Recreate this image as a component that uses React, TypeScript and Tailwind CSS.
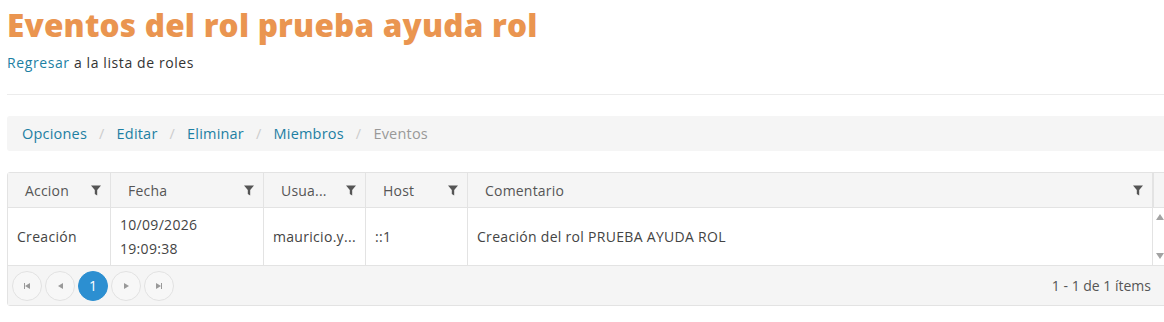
import { ReactNode } from "react";

const font = { fontFamily: '"Open Sans", "Noto Sans", sans-serif' };

const Funnel = () => (
    <svg width="10" height="11" viewBox="0 0 10 11" className="shrink-0">
        <path d="M0 0.5 H10 L6.2 5 V10.5 L3.8 9 V5 Z" fill="#555" />
    </svg>
);

const HeaderCell = ({ label, width, last }: { label: string; width: string; last?: boolean }) => (
    <div className={`${width} flex items-center justify-between pl-[17px] pr-[9px] ${last ? "" : "border-r"} border-[#e3e3e3]`}>
        <span className="text-[14px] text-[#555] tracking-[0.2px]">{label}</span>
        <Funnel />
    </div>
);

const BodyCell = ({ children, width }: { children: ReactNode; width: string }) => (
    <div className={`${width} flex items-center px-[9px] border-r border-[#e3e3e3] text-[14px] text-[#444] leading-[24px] tracking-[0.3px]`}>
        {children}
    </div>
);

const PagerButton = ({ children, active }: { children: ReactNode; active?: boolean }) => (
    <div
        className={`w-[30px] h-[30px] rounded-full flex items-center justify-center border ${
            active ? "bg-[#2c8fd1] border-[#2c8fd1] text-white" : "bg-[#f7f7f7] border-[#e2e2e2]"
        }`}
    >
        {children}
    </div>
);

const Tri = ({ dir }: { dir: "left" | "right" }) => (
    <svg width="5" height="6" viewBox="0 0 5 6">
        {dir === "left" ? <path d="M5 0 V6 L0 3 Z" fill="#999" /> : <path d="M0 0 V6 L5 3 Z" fill="#999" />}
    </svg>
);

export default function App() {
    return (
        <div className="w-[1164px] h-[322px] overflow-hidden bg-white" style={font}>
            <div className="w-[1180px] pl-[7px]">
                {/* Title */}
                <h1 className="text-[31.5px] font-extrabold text-[#ea9550] leading-[40px] pt-[5px] tracking-[0.2px]">
                    Eventos del rol prueba ayuda rol
                </h1>
                <p className="text-[14px] text-[#333] mt-[8px] leading-[20px] tracking-[0.6px]">
                    <a className="text-[#1d7fa3]">Regresar</a> a la lista de roles
                </p>
                <div className="border-t border-[#ececec] mt-[21px]" />

                {/* Breadcrumb */}
                <div className="mt-[21px] h-[35px] bg-[#f5f5f5] flex items-center pl-[15px] text-[14.5px] tracking-[0.2px] rounded-l-[3px]">
                    <a className="text-[#1d7fa3]">Opciones</a>
                    <span className="text-[#ccc] px-[12px]">/</span>
                    <a className="text-[#1d7fa3]">Editar</a>
                    <span className="text-[#ccc] px-[12px]">/</span>
                    <a className="text-[#1d7fa3]">Eliminar</a>
                    <span className="text-[#ccc] px-[12px]">/</span>
                    <a className="text-[#1d7fa3]">Miembros</a>
                    <span className="text-[#ccc] px-[12px]">/</span>
                    <span className="text-[#999]">Eventos</span>
                </div>

                {/* Grid */}
                <div className="mt-[21px] border border-[#e3e3e3] rounded-l-[3px]">
                    <div className="flex h-[35px] bg-[#f5f5f5] border-b border-[#e3e3e3]">
                        <HeaderCell label="Accion" width="w-[103px]" />
                        <HeaderCell label="Fecha" width="w-[153px]" />
                        <HeaderCell label="Usua..." width="w-[102px]" />
                        <HeaderCell label="Host" width="w-[102px]" />
                        <HeaderCell label="Comentario" width="w-[685px]" />
                        <div className="w-[12px] border-l border-[#e3e3e3]" />
                    </div>
                    <div className="flex h-[58px] bg-white border-b border-[#e3e3e3]">
                        <BodyCell width="w-[103px]">Creación</BodyCell>
                        <BodyCell width="w-[153px]">
                            <div className="leading-[24px]">
                                10/09/2026
                                <br />
                                19:09:38
                            </div>
                        </BodyCell>
                        <BodyCell width="w-[102px]">mauricio.y...</BodyCell>
                        <BodyCell width="w-[102px]">::1</BodyCell>
                        <BodyCell width="w-[685px]">Creación del rol PRUEBA AYUDA ROL</BodyCell>
                        <div className="w-[14px] flex flex-col justify-between items-center py-[6px]">
                            <svg width="8" height="6" viewBox="0 0 8 6">
                                <path d="M0 6 L4 0 L8 6 Z" fill="#a3a3a3" />
                            </svg>
                            <svg width="8" height="6" viewBox="0 0 8 6">
                                <path d="M0 0 L4 6 L8 0 Z" fill="#a3a3a3" />
                            </svg>
                        </div>
                    </div>
                    <div className="flex items-center justify-between h-[39px] bg-[#f5f5f5] pl-[4px] pr-[28px]">
                        <div className="flex gap-[3px]">
                            <PagerButton>
                                <div className="flex items-center">
                                    <div className="w-[1px] h-[6px] bg-[#999]" />
                                    <Tri dir="left" />
                                </div>
                            </PagerButton>
                            <PagerButton>
                                <Tri dir="left" />
                            </PagerButton>
                            <PagerButton active>
                                <span className="text-[14px] leading-none">1</span>
                            </PagerButton>
                            <PagerButton>
                                <Tri dir="right" />
                            </PagerButton>
                            <PagerButton>
                                <div className="flex items-center">
                                    <Tri dir="right" />
                                    <div className="w-[1px] h-[6px] bg-[#999]" />
                                </div>
                            </PagerButton>
                        </div>
                        <span className="text-[14px] text-[#555]">1 - 1 de 1 ítems</span>
                    </div>
                </div>
            </div>
        </div>
    );
}
